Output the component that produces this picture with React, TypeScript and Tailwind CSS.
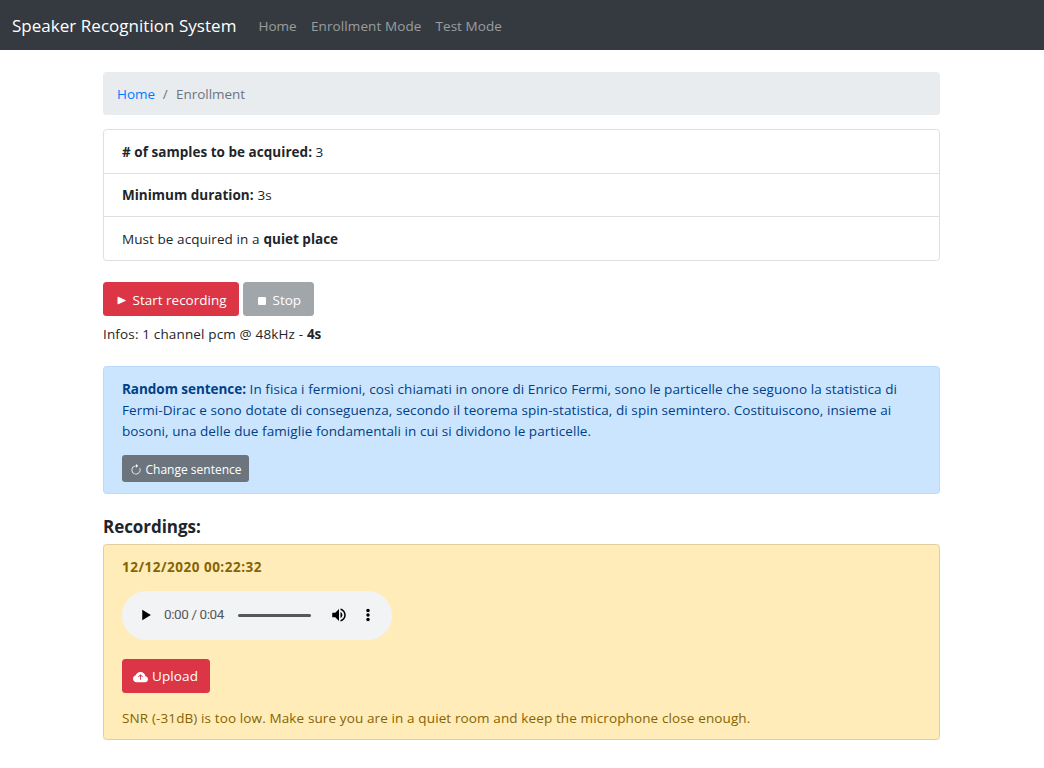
import React from "react";

function PlayIcon() {
  return (
    <svg className="mr-[4.500px] h-3.5 w-3.5" viewBox="0 0 14 14" fill="currentColor">
      <path d="M3.500 4.300v6.400c0 .5.4.7.8.5l7-3.100c.5-.3.5-.9 0-1.200l-7-3.100c-.4-.2-.8 0-.8.5z" />
    </svg>
  );
}

function StopIcon() {
  return (
    <svg className="mr-[4.500px] h-3.5 w-3.5" viewBox="0 0 14 14" fill="currentColor">
      <rect x="4" y="4" width="8" height="8" rx="1.200" />
    </svg>
  );
}

function RefreshIcon() {
  return (
    <svg className="mt-px mr-[3.500px] h-3 w-3" viewBox="0 0 16 16" fill="currentColor">
      <path d="M8 3a5 5 0 1 0 4.546 2.914.5.5 0 0 1 .908-.417A6 6 0 1 1 8 2z" />
      <path d="M8 4.466V.534a.25.25 0 0 1 .41-.192l2.36 1.966c.12.1.12.284 0 .384L8.41 4.658A.25.25 0 0 1 8 4.466" />
    </svg>
  );
}

function CloudUploadIcon() {
  return (
    <svg className="mt-[3px] mr-[4px] h-[15px] w-[15px]" viewBox="0 0 16 16" fill="currentColor">
      <path
        fillRule="evenodd"
        d="M8 2a5.530 5.530 0 0 0-3.594 1.342c-.766.66-1.321 1.520-1.464 2.383C1.266 6.095 0 7.555 0 9.318 0 11.366 1.708 13 3.781 13h8.906C14.502 13 16 11.570 16 9.773c0-1.636-1.242-2.969-2.834-3.194C12.923 3.999 10.690 2 8 2m2.354 4.854-2-2a.5.5 0 0 0-.708 0l-2 2a.5.5 0 1 0 .708.707L7.500 6.207V10a.5.5 0 0 0 1 0V6.207l1.146 1.147a.5.5 0 0 0 .708-.708"
      />
    </svg>
  );
}

function AudioPlayer() {
  return (
    <div className="flex h-[49px] w-[270px] items-center rounded-full bg-[#f1f3f4] text-black">
      <svg className="mb-px ml-[14.500px] h-[18px] w-[18px]" viewBox="0 0 24 24" fill="currentColor">
        <path d="M7 5v14l11.500-7z" />
      </svg>
      <span className="mb-[3px] ml-[9.500px] w-[74px] font-[Roboto] text-[13.500px] tracking-[-0.4px] whitespace-nowrap text-[#56585a]">
        0:00 / 0:04
      </span>
      <div className="h-[3px] w-[73px] rounded-full bg-[#565758]" />
      <svg className="mb-px ml-[19px] h-[18px] w-[18px]" viewBox="0 0 24 24" fill="currentColor">
        <path d="M3 9v6h4l5 5V4L7 9H3zm13.500 3c0-1.770-1.020-3.290-2.500-4.030v8.050c1.480-.730 2.500-2.250 2.500-4.020zM14 3.230v2.060c2.890.860 5 3.540 5 6.710s-2.110 5.850-5 6.710v2.060c4.010-.910 7-4.490 7-8.770s-2.990-7.860-7-8.770z" />
      </svg>
      <svg className="mb-px ml-[11px] h-[18px] w-[18px]" viewBox="0 0 24 24" fill="currentColor">
        <circle cx="12" cy="6" r="2.300" />
        <circle cx="12" cy="12" r="2.300" />
        <circle cx="12" cy="18" r="2.300" />
      </svg>
    </div>
  );
}

export default function App() {
  return (
    <div className="min-h-screen bg-white font-['Open_Sans','Noto_Sans',sans-serif] text-[13.5px] leading-[21px] text-[#212529]">
      <nav className="flex h-[50px] items-center bg-[#343a40] pl-3 text-white/50">
        <a className="mr-[21.500px] w-[225px] text-[17px] tracking-[0.03px] whitespace-nowrap text-white">
          Speaker Recognition System
        </a>
        <a className="mr-3.5 w-[38.500px] pt-0.5">Home</a>
        <a className="mr-3.5 pt-0.5 tracking-[0.1px]">Enrollment Mode</a>
        <a className="pt-0.5 tracking-[0.05px]">Test Mode</a>
      </nav>

      <main className="mt-[22px] ml-[103px] w-[837px]">
        <div className="flex h-[43px] items-center rounded-[3.5px] bg-[#e9ecef] px-3.5 pt-px text-[#6c757d]">
          <a className="text-[#007bff]">Home</a>
          <span className="px-[7.500px]">/</span>
          <span className="pl-px tracking-[-0.05px]">Enrollment</span>
        </div>

        <ul className="mt-3.5 divide-y divide-[#dfdfdf] rounded-[3.5px] border border-[#dfdfdf]">
          <li className="flex h-11 items-center gap-[3.500px] px-[18px] pt-0.5">
            <b className="tracking-[0.03px]"># of samples to be acquired:</b>3
          </li>
          <li className="flex h-[43px] items-center gap-1 px-[18px] pt-px">
            <b>Minimum duration:</b>3s
          </li>
          <li className="flex h-[43px] items-center gap-1 px-[18px] pt-0.5">
            <span className="tracking-[0.07px]">Must be acquired in a</span>
            <b>quiet place</b>
          </li>
        </ul>

        <div className="mt-[21px] flex gap-1 text-white">
          <button className="flex h-[34px] w-[136px] items-center rounded-[3.5px] bg-[#dc3545] pt-0.5 pl-[11px]">
            <PlayIcon />
            Start recording
          </button>
          <button className="flex h-[34px] w-[71px] items-center rounded-[3.5px] bg-[#a1a6ab] pt-0.5 pl-[11px]">
            <StopIcon />
            Stop
          </button>
        </div>
        <p className="mt-2 tracking-[0.15px]">
          Infos: 1 channel pcm @ 48kHz - <b className="tracking-normal">4s</b>
        </p>

        <section className="mt-[21px] h-[128px] rounded-[3.5px] border border-[#b8daff] bg-[#cce5ff] px-[18px] pt-3 text-[#004085]">
          <p className="tracking-[0.07px] whitespace-nowrap">
            <b className="tracking-[-0.04px]">Random sentence:</b> In fisica i fermioni, così chiamati in onore di Enrico Fermi, sono le
            particelle che seguono la statistica di
            <br />
            Fermi-Dirac e sono dotate di conseguenza, secondo il teorema spin-statistica, di spin semintero. Costituiscono,
            insieme ai
            <br />
            bosoni, una delle due famiglie fondamentali in cui si dividono le particelle.
          </p>
          <button className="mt-[13px] flex h-[27px] w-[127px] items-center rounded-[3px] bg-[#6c757d] pt-0.5 pl-2 text-[12px] whitespace-nowrap text-white">
            <RefreshIcon />
            Change sentence
          </button>
        </section>

        <h5 className="mt-[22px] text-[17px] font-bold tracking-[-0.05px]">Recordings:</h5>
        <section className="mt-[7px] h-[196px] rounded-[3.5px] border border-[#dfcf9f] bg-[#ffecb8] px-[18px] pt-3 text-[#856404]">
          <b className="block tracking-[0.5px]">12/12/2020 00:22:32</b>
          <div className="mt-[13px]">
            <AudioPlayer />
          </div>
          <button className="mt-[19px] flex h-[34px] w-[88px] items-center rounded-[3.5px] bg-[#dc3545] pl-[11px] tracking-[0.1px] text-white">
            <CloudUploadIcon />
            Upload
          </button>
          <p className="mt-[15px] tracking-[0.12px]">
            SNR (-31dB) is too low. Make sure you are in a quiet room and keep the microphone close enough.
          </p>
        </section>
      </main>
    </div>
  );
}
